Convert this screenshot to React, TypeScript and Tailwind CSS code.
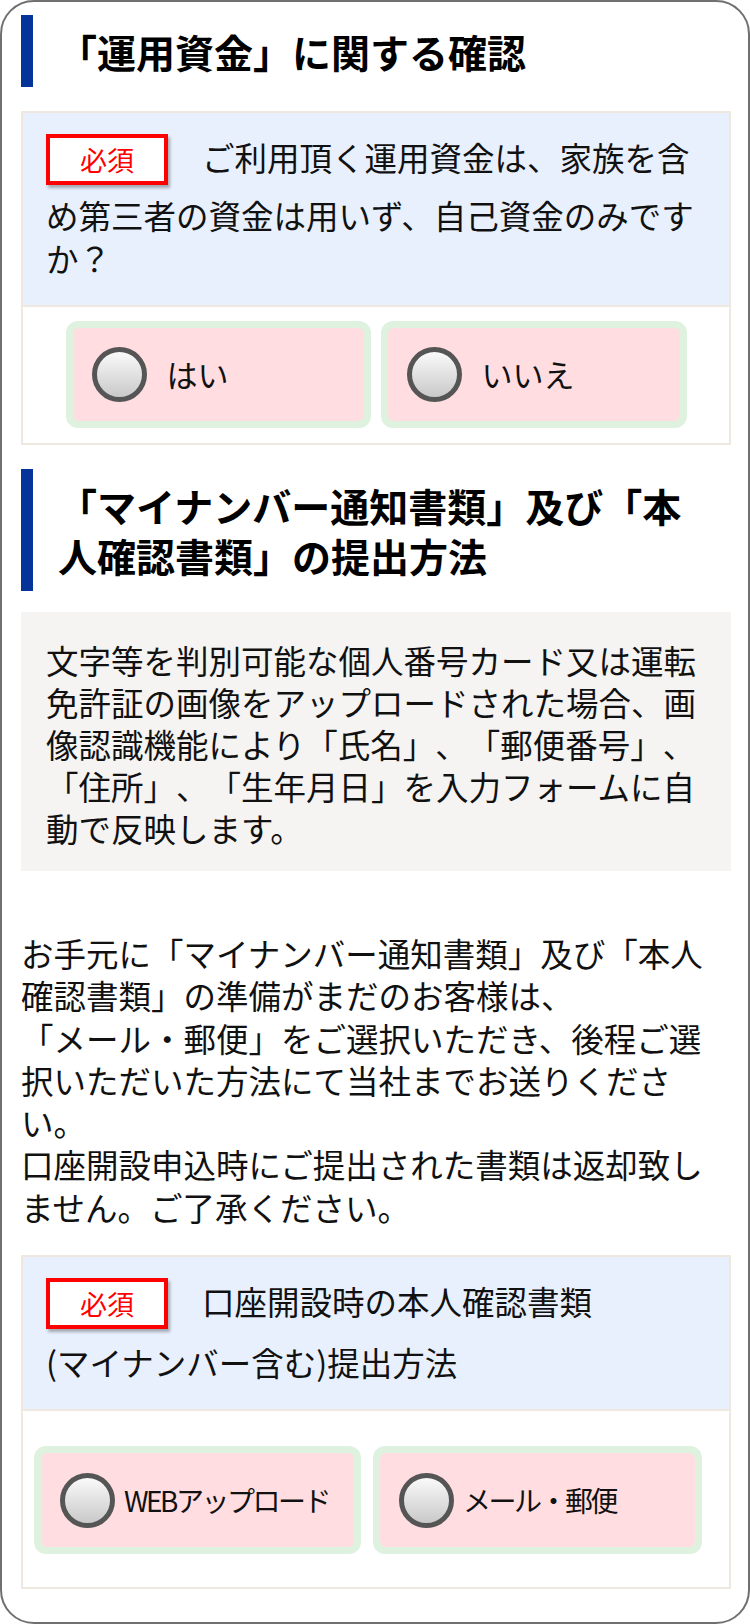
import React from "react";

function Badge() {
  return (
    <span className="relative -top-[3px] inline-block align-middle w-[122px] h-[51px] my-[5px] mr-[34px] border-[4px] border-[#ff0000] bg-white text-[#ff0000] text-[27px] leading-[43px] text-center shadow-[2px_3px_3px_rgba(0,0,0,0.3)]">
      必須
    </span>
  );
}

function Radio() {
  return (
    <span className="shrink-0 block w-[55px] h-[55px] rounded-full border-[5px] border-[#555555] bg-gradient-to-b from-[#fafafa] to-[#c9c9c9]" />
  );
}

function Option({ label, w, h, textClass, gapClass }: { label: string; w: string; h: string; textClass: string; gapClass: string }) {
  return (
    <div className={`${w} ${h} rounded-[12px] bg-[#dff2df] p-[7px]`}>
      <div className="h-full w-full rounded-[6px] bg-[#ffdde0] flex items-center pl-[19px]">
        <Radio />
        <span className={`${gapClass} ${textClass} text-[#111]`}>{label}</span>
      </div>
    </div>
  );
}

function Heading({ children }: { children: React.ReactNode }) {
  return (
    <h2 className="border-l-[12px] border-[#063399] pl-[25px] pr-[20px] py-[11px] text-[39px] font-bold leading-[50px] text-black">
      {children}
    </h2>
  );
}

export default function App() {
  return (
    <div className="w-[750px] h-[1624px] box-border border-2 border-[#707070] rounded-[34px] bg-white pt-[13px] pl-[19px] pr-[17px] overflow-hidden font-['Noto_Sans_CJK_JP',sans-serif] text-black [text-spacing-trim:space-all]">
      <Heading>「運用資金」に関する確認</Heading>

      <div className="mt-[24px] border-2 border-[#efe8e1]">
        <div className="bg-[#e9f0fd] pl-[23px] pr-[23px] pt-[19px] pb-[26px] text-[32.5px] leading-[43px] text-[#111]">
          <Badge />
          ご利用頂く運用資金は、家族を含め第三者の資金は用いず、自己資金のみですか？
        </div>
        <div className="border-t-2 border-[#efe8e1] flex justify-center gap-[10px] pt-[14px] pb-[15px]">
          <Option label="はい" w="w-[305px]" h="h-[107px]" textClass="text-[31px]" gapClass="ml-[20px]" />
          <Option label="いいえ" w="w-[306px]" h="h-[107px]" textClass="text-[31px]" gapClass="ml-[20px]" />
        </div>
      </div>

      <div className="mt-[24px]">
        <Heading>「マイナンバー通知書類」及び「本人確認書類」の提出方法</Heading>
      </div>

      <div className="mt-[21px] bg-[#f5f4f2] pl-[25px] pr-[25px] pt-[27px] pb-[22px] text-[32.5px] leading-[42px] text-[#111]">
        文字等を判別可能な個人番号カード又は運転免許証の画像をアップロードされた場合、画像認識機能により「氏名」、「郵便番号」、「住所」、「生年月日」を入力フォームに自動で反映します。
      </div>

      <p className="mt-[61px] text-[32.5px] leading-[42.3px] text-[#111]">
        お手元に「マイナンバー通知書類」及び「本人確認書類」の準備がまだのお客様は、
        <br />
        「メール・郵便」をご選択いただき、後程ご選択いただいた方法にて当社までお送りください。
        <br />
        口座開設申込時にご提出された書類は返却致しません。ご了承ください。
      </p>

      <div className="mt-[27px] border-2 border-[#efe8e1]">
        <div className="bg-[#e9f0fd] pl-[23px] pr-[23px] pt-[19px] pb-[26px] text-[32.5px] leading-[43px] text-[#111]">
          <Badge />
          口座開設時の本人確認書類
          <br />
          <span className="inline-block mt-[3px]">(マイナンバー含む)提出方法</span>
        </div>
        <div className="border-t-2 border-[#efe8e1] flex gap-[12px] pl-[11px] pt-[35px] pb-[33px]">
          <Option label="WEBアップロード" w="w-[327px]" h="h-[108px]" textClass="text-[28px] tracking-[-2.5px]" gapClass="ml-[9px]" />
          <Option label="メール・郵便" w="w-[329px]" h="h-[108px]" textClass="text-[28px] tracking-[-2.5px]" gapClass="ml-[9px]" />
        </div>
      </div>
    </div>
  );
}
